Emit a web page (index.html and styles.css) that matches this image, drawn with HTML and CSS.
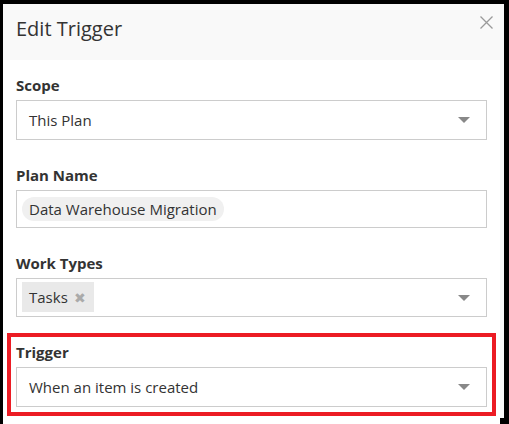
FILE: index.html
```html
<!DOCTYPE html>
<html lang="en">
<head>
  <meta charset="UTF-8" />
  <meta name="viewport" content="width=device-width, initial-scale=1.0"/>
  <title>Edit Trigger</title>
  <link rel="stylesheet" href="styles.css">
</head>
<body>
  <div class="modal">
    <div class="modal-header">
      <h2>Edit Trigger</h2>
      <button class="close" aria-label="Close">
        <svg width="13" height="13" viewBox="0 0 13 13"><path d="M0.5 0.5 L12.5 12.5 M12.5 0.5 L0.5 12.5" stroke="#9a9a9a" stroke-width="1.3" fill="none"/></svg>
      </button>
    </div>
    <div class="modal-body">
      <div class="field">
        <label>Scope</label>
        <div class="select">
          <span>This Plan</span>
          <span class="caret"></span>
        </div>
      </div>

      <div class="field">
        <label>Plan Name</label>
        <div class="select tags plain">
          <span class="pill">Data Warehouse Migration</span>
        </div>
      </div>

      <div class="field">
        <label>Work Types</label>
        <div class="select tags">
          <span class="chip">Tasks <span class="remove">&#10006;</span></span>
          <span class="caret"></span>
        </div>
      </div>

      <div class="field highlight">
        <label>Trigger</label>
        <div class="select">
          <span>When an item is created</span>
          <span class="caret"></span>
        </div>
      </div>
    </div>
  </div>
</body>
</html>
```

FILE: styles.css
```css
html, body {
  height: 100%;
}
body {
  margin: 0;
  padding: 4px 5px 6px 3px;
  box-sizing: border-box;
  background-color: #000;
  font-family: "Open Sans", "Noto Sans", Arial, sans-serif;
  color: #333;
}
.modal {
  height: 414px;
  background-color: #f9f9f9;
  display: flex;
  flex-direction: column;
}
.modal-header {
  height: 56px;
  flex: none;
  display: flex;
  justify-content: space-between;
  align-items: flex-start;
  padding: 0 11px 0 13px;
}
.modal-header h2 {
  margin: 0;
  padding-top: 11px;
  font-size: 20px;
  font-weight: normal;
  color: #333;
}
.close {
  background: none;
  border: none;
  padding: 0;
  margin-top: 12px;
  cursor: pointer;
}
.modal-body {
  flex: 1;
  background-color: #fff;
  margin-right: 4px;
  padding: 15px 13px 0 13px;
}
.field {
  margin-bottom: 25px;
}
.field label {
  display: block;
  font-size: 15px;
  font-weight: bold;
  line-height: 20px;
  margin-bottom: 5px;
}
.select {
  height: 40px;
  box-sizing: border-box;
  border: 1px solid #ccc;
  display: flex;
  align-items: center;
  justify-content: space-between;
  padding: 0 16px 0 12px;
  font-size: 15px;
}
.select.tags {
  height: 39px;
  padding-left: 5px;
}
.select.plain {
  height: 38px;
}
.caret {
  width: 0;
  height: 0;
  border-left: 6px solid transparent;
  border-right: 6px solid transparent;
  border-top: 6px solid #888;
}
.pill {
  background-color: #f0f0f0;
  border-radius: 12px;
  height: 24px;
  line-height: 24px;
  padding: 0 7px;
}
.chip {
  background-color: #e9e9e9;
  height: 30px;
  line-height: 30px;
  padding: 0 8px 0 7px;
  align-self: flex-start;
  margin-top: 3px;
}
.remove {
  color: #aaa;
  font-size: 14px;
  margin-left: 2px;
}
.highlight {
  outline: 4px solid #ec1c24;
  outline-offset: 5px;
}
```
